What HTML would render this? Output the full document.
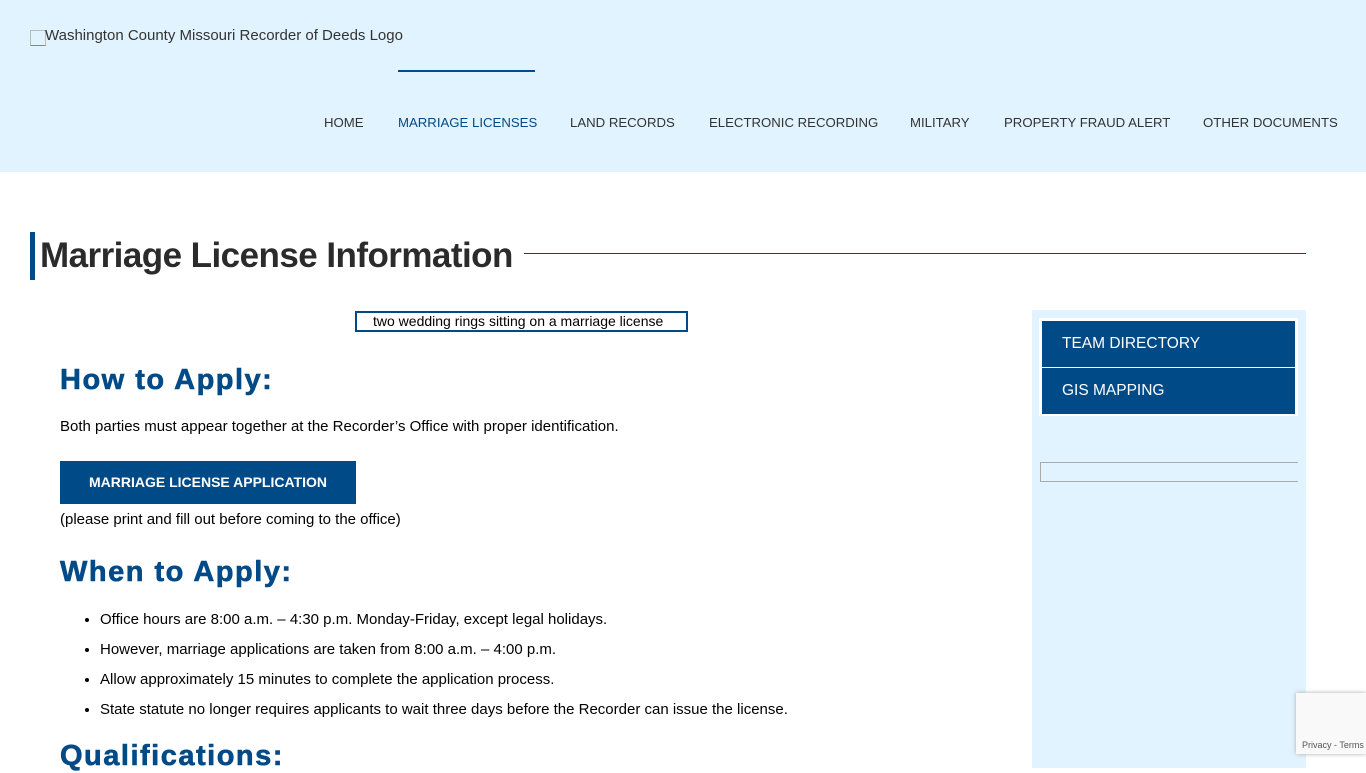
<!DOCTYPE html>
<html><head><meta charset="utf-8"><style>
*{margin:0;padding:0;box-sizing:border-box}
body{width:1366px;height:768px;overflow:hidden;font-family:"Liberation Sans",Arial,sans-serif;background:#fff;position:relative;color:#000}
.hdr{position:absolute;left:0;top:0;width:1366px;height:172px;background:#e1f3fe}
.logo{position:absolute;left:30px;top:27px;font-size:15px;color:#333}
.logo i{display:inline-block;width:16px;height:16px;border:1px solid #bbb;border-bottom-color:#5a5;vertical-align:-6px;margin-right:-1px;margin-top:-6px}
.nav{position:absolute;top:115px;font-size:13.2px;color:#333}
.nav span{position:absolute;white-space:nowrap}
.bar{position:absolute;left:398px;top:70px;width:137px;height:2px;background:#004a87}
h1{position:absolute;left:40px;top:236px;font-size:35px;font-weight:bold;color:#2b2b2b;letter-spacing:-0.55px}
.vb{position:absolute;left:30px;top:232px;width:5px;height:48px;background:#004a87}
.hl{position:absolute;left:524px;top:253px;width:782px;height:1px;background:#004a87}
.img1{position:absolute;left:355px;top:311px;width:333px;height:21px;border:2px solid #004a87;font-size:14px;padding-left:16px;line-height:17px}
h2{position:absolute;left:60px;font-size:29px;font-weight:bold;color:#004a87;letter-spacing:1.5px;-webkit-text-stroke:0.6px #004a87}
.p{position:absolute;left:60px;font-size:15px}
.btn{position:absolute;left:60px;top:461px;width:296px;height:43px;background:#004a87;color:#fff;font-weight:bold;font-size:14px;text-align:center;line-height:43px}
ul{position:absolute;left:100px;top:611px;font-size:15px;list-style:disc}
ul li{height:30px}
.side{position:absolute;left:1032px;top:310px;width:274px;height:458px;background:#e1f3fe}
.sb{position:absolute;left:1042px;width:253px;height:46px;background:#004a87;color:#fff;font-size:15.5px;padding-left:20px;line-height:46px}
.simg{position:absolute;left:1040px;top:462px;width:258px;height:20px;border-top:1px solid #aaa;border-bottom:1px solid #aaa;border-left:1px solid #aaa}
.rc{position:absolute;left:1296px;top:693px;width:70px;height:61px;background:#f9f9f9;box-shadow:0 0 4px #aaa;font-size:9px;color:#555;padding:47px 0 0 6px}
</style></head><body>
<div class="hdr">
<div class="logo"><i></i>Washington County Missouri Recorder of Deeds Logo</div>
<div class="bar"></div>
<div class="nav">
<span style="left:324px">HOME</span>
<span style="left:398px;color:#004a87">MARRIAGE LICENSES</span>
<span style="left:570px">LAND RECORDS</span>
<span style="left:709px">ELECTRONIC RECORDING</span>
<span style="left:910px">MILITARY</span>
<span style="left:1004px">PROPERTY FRAUD ALERT</span>
<span style="left:1203px">OTHER DOCUMENTS</span>
</div></div>
<div class="vb"></div><h1>Marriage License Information</h1><div class="hl"></div>
<div class="img1">two wedding rings sitting on a marriage license</div>
<h2 style="top:364px">How to Apply:</h2>
<div class="p" style="top:418px">Both parties must appear together at the Recorder’s Office with proper identification.</div>
<div class="btn">MARRIAGE LICENSE APPLICATION</div>
<div class="p" style="top:511px">(please print and fill out before coming to the office)</div>
<h2 style="top:556px">When to Apply:</h2>
<ul>
<li>Office hours are 8:00 a.m. – 4:30 p.m. Monday-Friday, except legal holidays.</li>
<li>However, marriage applications are taken from 8:00 a.m. – 4:00 p.m.</li>
<li>Allow approximately 15 minutes to complete the application process.</li>
<li>State statute no longer requires applicants to wait three days before the Recorder can issue the license.</li>
</ul>
<h2 style="top:740px">Qualifications:</h2>
<div class="side"></div>
<div style="position:absolute;left:1039px;top:318px;width:259px;height:98px;background:#fff"></div>
<div class="sb" style="top:321px">TEAM DIRECTORY</div>
<div class="sb" style="top:368px">GIS MAPPING</div>
<div class="simg"></div>
<div class="rc">Privacy - Terms</div>
</body></html>
